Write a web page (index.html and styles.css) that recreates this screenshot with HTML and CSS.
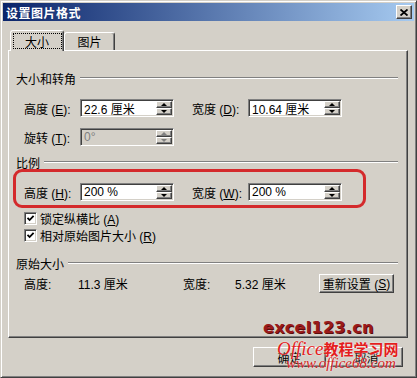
FILE: index.html
```html
<!DOCTYPE html>
<html lang="zh-CN">
<head>
    <meta charset="UTF-8">
    <title>设置图片格式</title>
    <link rel="stylesheet" href="styles.css">
</head>
<body>
    <div class="window">
        <div class="titlebar">
            <span class="title">设置图片格式</span>
            <span class="close-btn">
                <svg width="8" height="7" viewBox="0 0 8 7"><path d="M0.5 0.5 L7.5 6.5 M7.5 0.5 L0.5 6.5" stroke="#000" stroke-width="1.8"/></svg>
            </span>
        </div>

        <div class="tabs">
            <div class="tab active"><span class="focus">大小</span></div>
            <div class="tab">图片</div>
        </div>

        <div class="panel">
            <div class="group-head gh-size"><span>大小和转角</span><i class="etch"></i></div>
            <div class="row row-size">
                <span class="lbl">高度 (<u>E</u>):</span>
                <div class="spin"><span class="val">22.6 厘米</span><span class="spin-btns"><b class="up"></b><b class="down"></b></span></div>
                <span class="lbl lbl2">宽度 (<u>D</u>):</span>
                <div class="spin"><span class="val">10.64 厘米</span><span class="spin-btns"><b class="up"></b><b class="down"></b></span></div>
            </div>
            <div class="row row-rotate">
                <span class="lbl">旋转 (<u>T</u>):</span>
                <div class="spin disabled"><span class="val">0°</span><span class="spin-btns"><b class="up"></b><b class="down"></b></span></div>
            </div>

            <div class="group-head gh-scale"><span>比例</span><i class="etch"></i></div>
            <div class="highlight">
                <div class="row">
                    <span class="lbl">高度 (<u>H</u>):</span>
                    <div class="spin"><span class="val">200 %</span><span class="spin-btns"><b class="up"></b><b class="down"></b></span></div>
                    <span class="lbl lbl2">宽度 (<u>W</u>):</span>
                    <div class="spin"><span class="val">200 %</span><span class="spin-btns"><b class="up"></b><b class="down"></b></span></div>
                </div>
            </div>
            <div class="check-row">
                <span class="checkbox"><svg width="9" height="9" viewBox="0 0 9 9"><path d="M1.5 3.8 L3.6 6 L7.6 1.8" fill="none" stroke="#000" stroke-width="1.8"/></svg></span>
                <span>锁定纵横比 (<u>A</u>)</span>
            </div>
            <div class="check-row">
                <span class="checkbox"><svg width="9" height="9" viewBox="0 0 9 9"><path d="M1.5 3.8 L3.6 6 L7.6 1.8" fill="none" stroke="#000" stroke-width="1.8"/></svg></span>
                <span>相对原始图片大小 (<u>R</u>)</span>
            </div>

            <div class="group-head gh-orig"><span>原始大小</span><i class="etch"></i></div>
            <div class="row row-orig">
                <span class="o-lbl">高度:</span>
                <span class="o-val">11.3 厘米</span>
                <span class="o-lbl o-lbl2">宽度:</span>
                <span class="o-val o-val2">5.32 厘米</span>
                <span class="btn btn-reset">重新设置 (<u>S</u>)</span>
            </div>
        </div>

        <div class="footer">
            <span class="btn btn-ok">确定</span>
            <span class="btn btn-cancel">取消</span>
        </div>

        <div class="watermark">
            <div class="wm-site">excel123.cn</div>
            <div class="wm-name"><span class="wm-office">Office</span>教程学习网</div>
            <div class="wm-url">www.office68.com</div>
        </div>
    </div>
</body>
</html>
```

FILE: styles.css
```css
* {
    box-sizing: border-box;
}
body {
    margin: 0;
    font-family: "Liberation Sans", "Noto Sans CJK SC", sans-serif;
    font-size: 12px;
    color: #000;
    background: #d4d0c8;
}
.window {
    position: relative;
    width: 417px;
    height: 378px;
    padding: 2px;
    background: #d4d0c8;
    border: 1px solid;
    border-color: #d4d0c8 #404040 #404040 #d4d0c8;
    box-shadow: inset 1px 1px #fff, inset -1px -1px #808080;
    overflow: hidden;
}
.titlebar {
    height: 18px;
    display: flex;
    align-items: center;
    justify-content: space-between;
    padding: 0 2px 0 3px;
    background: linear-gradient(to right, #0a246a, #a6caf0);
    color: #fff;
}
.title {
    font-family: "Noto Sans CJK SC", sans-serif;
    font-weight: bold;
    font-size: 12px;
    letter-spacing: 0.5px;
}
.close-btn {
    width: 16px;
    height: 14px;
    display: flex;
    align-items: center;
    justify-content: center;
    background: #d4d0c8;
    border: 1px solid;
    border-color: #fff #404040 #404040 #fff;
    box-shadow: inset -1px -1px #808080;
}

/* tabs */
.tabs {
    position: relative;
    z-index: 1;
    display: flex;
    align-items: flex-end;
    height: 21px;
    margin: 9px 0 -1px 7px;
}
.tab {
    width: 51px;
    height: 18px;
    margin-bottom: 1px;
    display: flex;
    align-items: center;
    justify-content: center;
    background: #d4d0c8;
    border: 1px solid;
    border-bottom: none;
    border-color: #fff #404040 transparent #fff;
    box-shadow: inset -1px 0 #808080;
    border-radius: 3px 3px 0 0;
}
.tab.active {
    width: 54px;
    height: 21px;
    margin-bottom: 0;
}
.focus {
    width: 47px;
    height: 14px;
    display: flex;
    align-items: center;
    justify-content: center;
    outline: 1px dotted #000;
}

/* panel */
.panel {
    width: 400px;
    height: 288px;
    margin-left: 5px;
    border: 1px solid;
    border-color: #fff #404040 #404040 #fff;
    box-shadow: inset -1px -1px #808080;
}
.group-head {
    display: flex;
    align-items: center;
    height: 14px;
    padding: 0 9px 0 7px;
}
.group-head .etch {
    flex: 1;
    height: 2px;
    margin-left: 4px;
    border-top: 1px solid #808080;
    border-bottom: 1px solid #fff;
}
.gh-size {
    margin-top: 20px;
}
.gh-scale {
    margin-top: 9px;
}
.gh-orig {
    margin-top: 14px;
}
.row {
    display: flex;
    align-items: center;
    height: 18px;
    padding-left: 15px;
}
.row-size {
    margin-top: 14px;
}
.row-rotate {
    margin-top: 11px;
}
.lbl {
    width: 56px;
    white-space: nowrap;
}
.lbl2 {
    margin-left: 18px;
}
.spin {
    position: relative;
    width: 94px;
    height: 18px;
    display: flex;
    align-items: center;
    padding-left: 2px;
    background: #fff;
    border: 1px solid;
    border-color: #808080 #fff #fff #808080;
    box-shadow: inset 1px 1px #404040, inset -1px -1px #d4d0c8;
}
.spin .val {
    flex: 1;
    padding-left: 1px;
}
.spin.disabled {
    background: #d4d0c8;
    color: #808080;
}
.spin-btns {
    width: 16px;
    height: 14px;
    margin-right: 1px;
    display: flex;
    flex-direction: column;
}
.spin-btns b {
    flex: 1;
    display: flex;
    align-items: center;
    justify-content: center;
    background: #d4d0c8;
    border: 1px solid;
    border-color: #fff #404040 #404040 #fff;
    box-shadow: inset -1px -1px #808080;
}
.spin-btns b::after {
    content: "";
    border-left: 3px solid transparent;
    border-right: 3px solid transparent;
}
.spin-btns .up::after {
    border-bottom: 3px solid #000;
}
.spin-btns .down::after {
    border-top: 3px solid #000;
}
.spin.disabled .up::after {
    border-bottom-color: #808080;
}
.spin.disabled .down::after {
    border-top-color: #808080;
}

.highlight {
    width: 353px;
    height: 39px;
    margin-left: 4px;
    padding-top: 11px;
    border: 3px solid #d42a2c;
    border-radius: 9px;
}
.highlight .row {
    padding-left: 8px;
}

.check-row {
    display: flex;
    align-items: center;
    height: 13px;
    margin-top: 4px;
    padding-left: 15px;
}
.checkbox {
    width: 13px;
    height: 13px;
    margin-right: 3px;
    display: flex;
    align-items: center;
    justify-content: center;
    background: #fff;
    border: 1px solid;
    border-color: #808080 #fff #fff #808080;
    box-shadow: inset 1px 1px #404040, inset -1px -1px #d4d0c8;
}

.row-orig {
    height: 19px;
    margin-top: 4px;
}
.o-lbl {
    width: 54px;
}
.o-val {
    width: 105px;
}
.o-lbl2 {
    width: 52px;
}
.o-val2 {
    width: 84px;
}
.btn {
    display: flex;
    align-items: center;
    justify-content: center;
    background: #d4d0c8;
    border: 1px solid;
    border-color: #fff #404040 #404040 #fff;
    box-shadow: inset -1px -1px #808080;
}
.btn-reset {
    width: 75px;
    height: 19px;
}

.footer {
    display: flex;
    gap: 4px;
    margin: 9px 0 0 250px;
}
.footer .btn {
    width: 73px;
    height: 20px;
}

/* watermark over the bottom buttons */
.watermark {
    position: absolute;
    left: 258px;
    top: 318px;
    width: 156px;
}
.wm-site {
    height: 18px;
    margin-left: 4px;
    font-family: "DejaVu Sans", sans-serif;
    font-weight: bold;
    font-size: 16px;
    line-height: 18px;
    letter-spacing: 0.3px;
    color: #9a1a1a;
    text-shadow: 1px 1px 0 #5a0c0c;
}
.wm-name {
    display: flex;
    align-items: baseline;
    height: 16px;
    margin-top: 4px;
    margin-left: 18px;
    line-height: 16px;
    color: #e41e1e;
    font-family: "Noto Sans CJK SC", sans-serif;
    font-weight: bold;
    font-size: 15px;
    text-shadow: 0 0 2px #fff;
}
.wm-office {
    line-height: 16px;
    font-family: "Liberation Serif", serif;
    font-style: italic;
    font-weight: normal;
    font-size: 19px;
}
.wm-url {
    height: 13px;
    margin-left: 27px;
    line-height: 13px;
    font-family: "Liberation Serif", serif;
    font-style: italic;
    font-size: 15px;
    color: #d41c1c;
    text-shadow: 0 0 2px #fff;
}
```
